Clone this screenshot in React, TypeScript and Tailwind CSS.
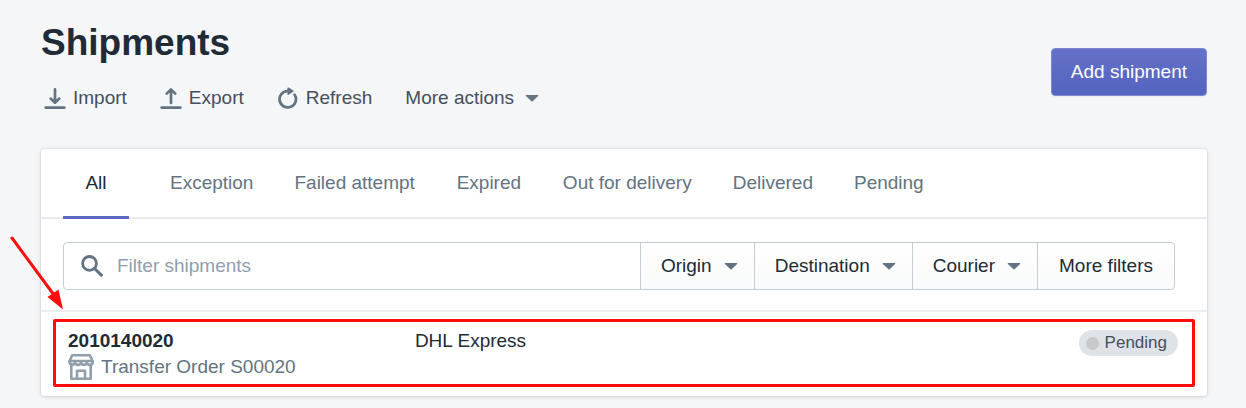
import type { ReactNode } from "react";

const tabs = ["All", "Exception", "Failed attempt", "Expired", "Out for delivery", "Delivered", "Pending"];

const menuFilters = ["Origin", "Destination", "Courier"];

function Caret() {
  return (
    <svg viewBox="0 0 14 8" className="h-2 w-3.5 shrink-0 fill-[#637381]" aria-hidden="true">
      <path d="M1.3 1h11.4c.6 0 .8.5.4.9L7.6 7.2c-.3.3-.8.3-1.1 0L.9 1.9C.5 1.5.7 1 1.3 1z" />
    </svg>
  );
}

function LineIcon({ children }: { children: ReactNode }) {
  return (
    <svg
      viewBox="0 0 22 22"
      className="size-[22px] shrink-0 text-[#637381]"
      fill="none"
      stroke="currentColor"
      strokeWidth="2.7"
      strokeLinecap="round"
      strokeLinejoin="round"
      aria-hidden="true"
    >
      {children}
    </svg>
  );
}

function ImportIcon() {
  return (
    <LineIcon>
      <path d="M11 2.3v13M6.7 11.6 11 15.7l4.3-4.1M1.6 20.6h18.8" />
    </LineIcon>
  );
}

function ExportIcon() {
  return (
    <LineIcon>
      <path d="M11 16V2.8M6.7 6.6 11 2.4l4.3 4.2M1.6 20.6h18.8" />
    </LineIcon>
  );
}

function RefreshIcon() {
  return (
    <LineIcon>
      <path d="M17.6 7.7A8.2 8.2 0 1 1 10.6 4H13" />
      <path d="M10.4 1.2c0-.7.7-1 1.3-.6l4.5 3c.5.3.5.9 0 1.2l-4.500 3c-.6.4-1.3.1-1.3-.6z" fill="currentColor" stroke="none" />
    </LineIcon>
  );
}

function SearchIcon() {
  return (
    <svg viewBox="0 0 22 22" className="size-[22px] shrink-0" fill="none" stroke="#637381" aria-hidden="true">
      <circle cx="8.5" cy="8.4" r="6.9" strokeWidth="2.8" />
      <path d="m13.6 13.5 6.7 6.6" strokeWidth="3.1" strokeLinecap="round" />
    </svg>
  );
}

function StoreIcon() {
  return (
    <svg
      viewBox="0 0 26 26"
      className="size-[26px] shrink-0"
      fill="none"
      stroke="#919eab"
      strokeWidth="2.6"
      strokeLinejoin="round"
      aria-hidden="true"
    >
      <path d="M4.2 1.3h17.6l2.9 5.9v1.4a2.95 2.6 0 0 1-5.85 0 2.95 2.6 0 0 1-5.85 0 2.95 2.6 0 0 1-5.85 0 2.95 2.6 0 0 1-5.7 0V7.2z" />
      <path d="M1.3 7h23.4M3.3 11v13.7h19.4V11M9 24.7v-8h8v8" />
    </svg>
  );
}

export default function App() {
  return (
    <main className="min-h-screen bg-[#f4f6f8] pt-[18px] pr-[39px] pb-3 pl-[41px] font-['Liberation_Sans',Arial,sans-serif] text-[19px] leading-7 text-[#212b36]">
      <header className="flex items-start justify-between">
        <div>
          <h1 className="text-[37px] leading-[50px] font-bold">Shipments</h1>
          <div className="mt-4 ml-[3px] flex items-center gap-[33px] text-[#454f5b]">
            <button type="button" className="flex items-center gap-[7px]">
              <ImportIcon />
              Import
            </button>
            <button type="button" className="flex items-center gap-[7px]">
              <ExportIcon />
              Export
            </button>
            <button type="button" className="flex items-center gap-[7px]">
              <RefreshIcon />
              Refresh
            </button>
            <button type="button" className="flex items-center gap-[11px]" aria-haspopup="menu">
              More actions
              <Caret />
            </button>
          </div>
        </div>
        <button
          type="button"
          className="mt-[30px] h-12 rounded-[4px] border border-[#7f88cf] bg-linear-to-b from-[#6371c7] to-[#5563c1] px-[19px] text-white shadow-xs"
        >
          Add shipment
        </button>
      </header>

      <section className="relative mt-[37px] rounded-[4px] bg-white shadow-[0_0_0_1px_rgba(63,63,68,0.06),0_1px_4px_rgba(63,63,68,0.16)]">
        <div role="tablist" className="flex gap-[41px] border-b-2 border-[#e9ebee] pl-[22px]">
          {tabs.map((tab, index) => (
            <button
              key={tab}
              type="button"
              role="tab"
              aria-selected={index === 0}
              className="-mb-0.5 h-[70px] min-w-[66px] border-b-3 border-transparent text-[#637381] aria-selected:border-[#5c6ac4] aria-selected:text-[#212b36]"
            >
              {tab}
            </button>
          ))}
        </div>

        <div className="flex pt-[23px] pr-8 pb-5 pl-[22px]">
          <label className="flex h-12 min-w-0 flex-1 items-center gap-3.5 rounded-l-[4px] border border-[#c4cdd5] pl-[17px]">
            <SearchIcon />
            <input
              type="search"
              aria-label="Filter shipments"
              placeholder="Filter shipments"
              className="min-w-0 flex-1 outline-none placeholder:text-[#919eab]"
            />
          </label>
          {menuFilters.map((label) => (
            <button
              key={label}
              type="button"
              aria-haspopup="menu"
              className="-ml-px flex h-12 items-center gap-3 border border-[#c4cdd5] bg-linear-to-b from-white to-[#f9fafb] pr-4 pl-5"
            >
              {label}
              <Caret />
            </button>
          ))}
          <button
            type="button"
            className="-ml-px h-12 rounded-r-[4px] border border-[#c4cdd5] bg-linear-to-b from-white to-[#f9fafb] px-[21px]"
          >
            More filters
          </button>
        </div>

        <ul className="border-t-2 border-[#ebeef3]">
          <li className="grid grid-cols-[5fr_11fr] pt-4 pr-[29px] pb-4 pl-[27px]">
            <div>
              <a href="#shipment" className="block font-bold leading-[26px]">
                2010140020
              </a>
              <div className="flex items-center gap-[7px] leading-[26px] text-[#637381]">
                <StoreIcon />
                Transfer Order S00020
              </div>
            </div>
            <div className="flex items-start justify-between leading-[26px]">
              <span>DHL Express</span>
              <span className="mt-0.5 flex items-center gap-1.5 rounded-full bg-[#dfe3e8] pr-[11px] pl-[7px] text-[17px] text-[#454f5b]">
                <span className="size-[13px] rounded-full bg-[#c8c9ca]" />
                Pending
              </span>
            </div>
          </li>
        </ul>

        <div className="pointer-events-none absolute right-3 bottom-[9px] left-3 h-[68px] rounded-[2px] border-3 border-[#ff0d0d]" />
        <svg
          viewBox="0 0 56 76"
          className="pointer-events-none absolute top-[86px] -left-8 h-[76px] w-14"
          aria-hidden="true"
        >
          <path d="M3 3 45 60" stroke="#ff0d0d" strokeWidth="3" strokeLinecap="round" />
          <path d="M54 74.5 38.5 62l11-7.5z" fill="#ff0d0d" />
        </svg>
      </section>
    </main>
  );
}
